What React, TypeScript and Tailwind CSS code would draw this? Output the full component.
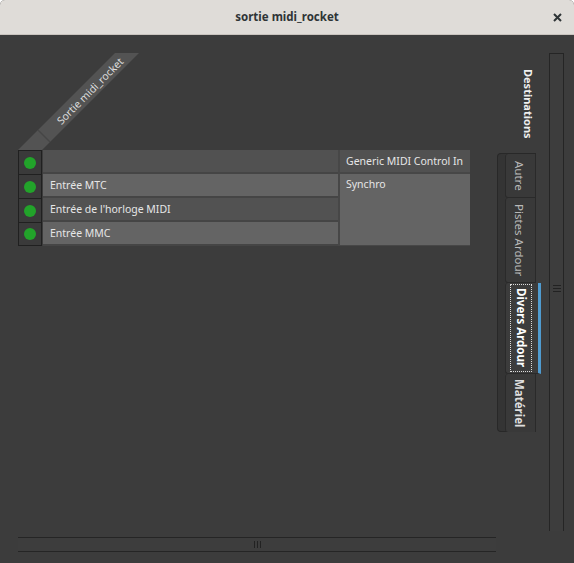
import React from 'react'

const rows = [
  { label: '', bg: 'bg-[#515151]' },
  { label: 'Entrée MTC', bg: 'bg-[#646464]' },
  { label: "Entrée de l'horloge MIDI", bg: 'bg-[#525252]' },
  { label: 'Entrée MMC', bg: 'bg-[#646464]' },
]

const tabs = [
  { label: 'Autre', h: 'h-[44px]', active: false, bold: false },
  { label: 'Pistes Ardour', h: 'h-[85px]', active: false, bold: false },
  { label: 'Divers Ardour', h: 'h-[91px]', active: true, bold: true },
  { label: 'Matériel', h: 'h-[58px]', active: false, bold: true },
]

function MatrixHeader() {
  // diagonal column header for the single source port
  return (
    <div className="relative h-[97px] w-[130px]">
      <svg className="absolute left-0 top-0" width="130" height="97" viewBox="0 0 130 97">
        <polygon points="0,97 24,97 121,0 97,0" fill="#535353" />
        <line x1="20" y1="77" x2="32" y2="89" stroke="#464646" strokeWidth="1.2" />
        <text
          x="72"
          y="38"
          fill="#dedede"
          fontSize="10.5"
          fontFamily="'Noto Sans', 'DejaVu Sans', sans-serif"
          textAnchor="middle"
          dominantBaseline="central"
          transform="rotate(-45 72 38)"
        >
          Sortie midi_rocket
        </text>
      </svg>
    </div>
  )
}

function Matrix() {
  return (
    <div className="flex">
      <div className="flex flex-col">
        {rows.map((r, i) => (
          <div key={i} className="flex h-[24px]">
            <div
              className={`w-[24px] flex items-center justify-center bg-[#3a3a3a] border-x border-t border-[#202020] ${
                i === rows.length - 1 ? 'border-b' : ''
              }`}
            >
              <div className="w-[12px] h-[12px] rounded-full bg-[#22a32a]" />
            </div>
            <div className={`w-[295px] ml-[1px] border-b-2 border-[#454545] ${r.bg} flex items-center pl-[7px] pt-[2px] text-[10.5px] text-[#e6e6e6]`}>
              {r.label}
            </div>
          </div>
        ))}
      </div>
      <div className="flex flex-col w-[132px] border-l-2 border-[#474747] h-[96px]">
        <div className="h-[24px] bg-[#515151] border-b-2 border-[#474747] flex items-center pl-[6px] pt-[2px] text-[10.5px] text-[#e6e6e6]">
          Generic MIDI Control In
        </div>
        <div className="flex-1 bg-[#646464] border-b border-[#474747] pl-[6px] pt-[3px] text-[10.5px] text-[#e6e6e6]">
          Synchro
        </div>
      </div>
    </div>
  )
}

export default function App() {
  return (
    <div className="w-[574px] h-[563px] bg-white font-['Noto_Sans','DejaVu_Sans',sans-serif]">
      <div className="w-[574px] h-[563px] bg-[#3c3c3c] rounded-t-[5px] overflow-hidden flex flex-col">
        {/* title bar */}
        <div className="h-[35px] shrink-0 bg-[#dfdcd8] border-b border-[#c9c4bf] flex items-center justify-center relative">
          <span className="text-[11.5px] font-bold text-[#2e3436]">sortie midi_rocket</span>
          <svg className="absolute right-[12px] top-[13px]" width="9" height="9" viewBox="0 0 9 9">
            <path d="M1 1L8 8M8 1L1 8" stroke="#2e3436" strokeWidth="2" />
          </svg>
        </div>

        <div className="flex flex-1">
          {/* matrix + horizontal scrollbar */}
          <div className="w-[496px] flex flex-col pl-[18px] pt-[18px]">
            <MatrixHeader />
            <Matrix />
            <div className="flex-1" />
            <div className="h-[15px] mb-[11px] border-y border-[#252525] bg-[#3d3d3d] flex items-center justify-center">
              <div className="flex gap-[2px] h-[7px]">
                <div className="w-[1px] bg-[#222]" />
                <div className="w-[1px] bg-[#222]" />
                <div className="w-[1px] bg-[#222]" />
              </div>
            </div>
          </div>

          {/* vertical tabs */}
          <div className="w-[53px] pl-[1px] pt-[34px] flex flex-col">
            <div className="h-[84px] pl-[25px]">
              <span className="[writing-mode:vertical-rl] whitespace-nowrap text-[11px] font-bold text-[#efefef] leading-[13px]">
                Destinations
              </span>
            </div>
            <div className="w-[39px] h-[279px] border-y border-l border-[#282828] rounded-l-[4px] bg-[#343434] pl-[7px] flex flex-col">
              {tabs.map((t, i) => (
                <div
                  key={t.label}
                  className={`${t.h} shrink-0 flex items-center justify-center rounded-l-[3px] border-l border-[#2a2a2a] ${
                    i < tabs.length - 1 ? 'border-b' : ''
                  } ${
                    t.active
                      ? 'w-[36px] bg-[#3c3c3c] border-r-[3px] border-r-[#4f9bd0] pr-[2px]'
                      : 'w-[31px] bg-[#393939] border-r pr-[3px]'
                  }`}
                >
                  {t.active ? (
                    <span className="[writing-mode:vertical-rl] whitespace-nowrap text-[11.5px] font-bold text-white leading-[14px] border border-dotted border-[#dcdcdc] px-[3px] py-[3px]">
                      {t.label}
                    </span>
                  ) : (
                    <span
                      className={`[writing-mode:vertical-rl] whitespace-nowrap text-[11.5px] leading-[14px] ${
                        t.bold ? 'font-bold text-[#dedede]' : 'text-[#b9b9b9]'
                      }`}
                    >
                      {t.label}
                    </span>
                  )}
                </div>
              ))}
            </div>
          </div>

          {/* vertical scrollbar */}
          <div className="w-[15px] mt-[18px] h-[478px] border-x border-t border-[#252525] bg-[#3d3d3d] flex items-center justify-center">
            <div className="flex flex-col gap-[2px] w-[8px] mt-[-8px]">
              <div className="h-[1px] bg-[#222]" />
              <div className="h-[1px] bg-[#222]" />
              <div className="h-[1px] bg-[#222]" />
            </div>
          </div>
          <div className="w-[10px]" />
        </div>
      </div>
    </div>
  )
}
